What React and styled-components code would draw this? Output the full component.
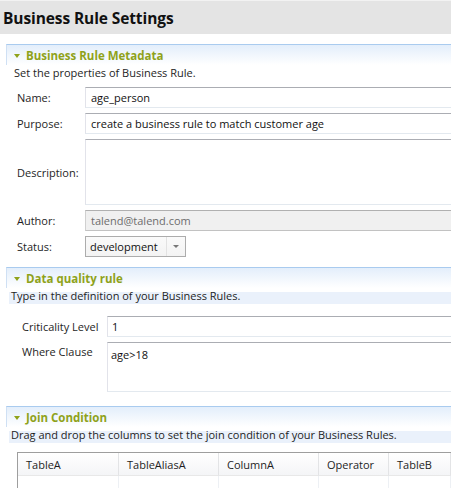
import React from 'react'
import styled, { createGlobalStyle } from 'styled-components'

const GlobalStyle = createGlobalStyle`
  body {
    margin: 0;
    background: #fff;
    overflow: hidden;
    font-family: "Open Sans", "Noto Sans", sans-serif;
    font-size: 11px;
    color: #1e1e1e;
  }
`

const Page = styled.div`
  width: 451px;
  height: 488px;
  overflow: hidden;
`

const TitleBar = styled.div`
  height: 34px;
  background: #e4e4e4;
  border-top: 1px solid #f2f2f2;
  display: flex;
  align-items: center;
  padding: 1px 0 0 3px;
  box-sizing: border-box;
  font-size: 15.5px;
  font-weight: 700;
  color: #111;
  letter-spacing: -0.1px;
`

const Section = styled.div`
  margin: ${p => p.top}px 0 0 6px;
`

const SectionHeader = styled.div`
  height: 20px;
  border-top: 1px solid #a9cbef;
  border-left: 1px solid #cfe0f4;
  background: linear-gradient(#e3eefb, #ffffff);
  display: flex;
  align-items: center;
  gap: 6px;
  padding-left: 7px;
  font-weight: 700;
  font-size: 11.5px;
  color: #8fa21a;
`

const Arrow = styled.span`
  width: 0;
  height: 0;
  border-left: 3.5px solid transparent;
  border-right: 3.5px solid transparent;
  border-top: 4px solid #8fa21a;
  margin-top: 1px;
`

const SectionText = styled.div`
  height: 16px;
  line-height: 16px;
  padding-left: ${p => (p.tinted ? 2 : 8)}px;
  margin-left: ${p => (p.tinted ? 3 : 0)}px;
  white-space: nowrap;
  background: ${p => (p.tinted ? 'linear-gradient(transparent 4px, #eaf1fb 4px)' : 'transparent')};
`

const Form = styled.div`
  display: grid;
  grid-template-columns: ${p => p.labelWidth}px 1fr;
  row-gap: ${p => p.gap}px;
  padding-left: ${p => p.indent}px;
  margin-top: ${p => p.top}px;
`

const Label = styled.div`
  display: flex;
  align-items: ${p => (p.alignTop ? 'flex-start' : 'center')};
  padding-top: ${p => (p.alignTop ? 2 : 0)}px;
  color: #1e1e1e;
`

const Field = styled.div`
  height: ${p => p.h}px;
  box-sizing: border-box;
  overflow: hidden;
  border-top: 1px solid ${p => (p.disabled ? '#b0b0b0' : '#abadb3')};
  border-left: 1px solid ${p => (p.disabled ? '#d0d0d0' : '#e2e3ea')};
  border-bottom: 1px solid ${p => (p.disabled ? '#c2c2c2' : '#e3e9ef')};
  background: ${p => (p.disabled ? '#f0f0f0' : '#fff')};
  color: ${p => (p.disabled ? '#6d6d6d' : '#111')};
  padding: ${p => (p.multi ? '4px' : '0')} 0 0 ${p => p.pad || 5}px;
  display: flex;
  align-items: ${p => (p.multi ? 'flex-start' : 'center')};
  white-space: nowrap;
`

const Combo = styled.div`
  width: 101px;
  height: 21px;
  box-sizing: border-box;
  border: 1px solid #acacac;
  background: linear-gradient(#fafafa, #f3f3f3);
  display: flex;
  align-items: stretch;
`

const ComboText = styled.div`
  flex: 1;
  display: flex;
  align-items: center;
  padding-left: 4px;
  color: #111;
`

const ComboButton = styled.div`
  width: 18px;
  border-left: 1px solid #e2e2e2;
  display: flex;
  align-items: center;
  justify-content: center;

  &::after {
    content: '';
    border-left: 3px solid transparent;
    border-right: 3px solid transparent;
    border-top: 3px solid #777;
  }
`

const Table = styled.div`
  margin: 9px 0 0 11px;
  border-top: 1px solid #9e9e9e;
  border-left: 1px solid #9e9e9e;
  height: 40px;
  display: grid;
  grid-template-columns: 101px 100px 100px 70px 1fr;
  grid-template-rows: 23px 1fr;
`

const HeadCell = styled.div`
  background: linear-gradient(#ffffff, #f4f5f7);
  border-right: 1px solid #e3e4e6;
  border-bottom: 1px solid #e8e8e8;
  display: flex;
  align-items: center;
  padding-left: 8px;
  color: #1e1e1e;
`

const BodyCell = styled.div`
  border-right: 1px solid #edf0f4;
`

const columns = ['TableA', 'TableAliasA', 'ColumnA', 'Operator', 'TableB']

const App = () => {
  return (
    <Page>
      <GlobalStyle />
      <TitleBar>Business Rule Settings</TitleBar>

      <Section top={10}>
        <SectionHeader><Arrow />Business Rule Metadata</SectionHeader>
        <SectionText>Set the properties of Business Rule.</SectionText>
        <Form labelWidth={68} gap={5} indent={11} top={6}>
          <Label>Name:</Label>
          <Field h={21}>age_person</Field>
          <Label>Purpose:</Label>
          <Field h={21}>create a business rule to match customer age</Field>
          <Label>Description:</Label>
          <Field h={66} />
          <Label>Author:</Label>
          <Field h={21} disabled>talend@talend.com</Field>
          <Label>Status:</Label>
          <Combo>
            <ComboText>development</ComboText>
            <ComboButton />
          </Combo>
        </Form>
      </Section>

      <Section top={10}>
        <SectionHeader><Arrow />Data quality rule</SectionHeader>
        <SectionText tinted>Type in the definition of your Business Rules.</SectionText>
        <Form labelWidth={85} gap={5} indent={16} top={12}>
          <Label>Criticality Level</Label>
          <Field h={21} pad={4}>1</Field>
          <Label alignTop>Where Clause</Label>
          <Field h={50} pad={3} multi>age&gt;18</Field>
        </Form>
      </Section>

      <Section top={14}>
        <SectionHeader><Arrow />Join Condition</SectionHeader>
        <SectionText tinted>Drag and drop the columns to set the join condition of your Business Rules.</SectionText>
        <Table>
          {columns.map(c => <HeadCell key={c}>{c}</HeadCell>)}
          {columns.map(c => <BodyCell key={c} />)}
        </Table>
      </Section>
    </Page>
  )
}

export default App
